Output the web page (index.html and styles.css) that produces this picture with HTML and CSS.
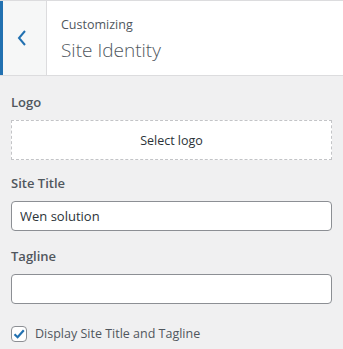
FILE: index.html
```html
<!DOCTYPE html>
<html lang="en">
<head>
    <meta charset="UTF-8">
    <meta name="viewport" content="width=device-width, initial-scale=1.0">
    <title>Customizing - Site Identity</title>
    <link rel="stylesheet" href="styles.css">
</head>
<body>
    <div class="panel-header">
        <button class="back-button" aria-label="Back">
            <svg width="10" height="16" viewBox="0 0 10 16">
                <path d="M8 1 L2 8 L8 15" fill="none" stroke="#2271b1" stroke-width="2"/>
            </svg>
        </button>
        <div class="panel-title">
            <span class="action">Customizing</span>
            <h3>Site Identity</h3>
        </div>
    </div>

    <div class="controls">
        <div class="control logo-control">
            <span class="control-label">Logo</span>
            <button class="upload-button">Select logo</button>
        </div>
        <div class="control">
            <label class="control-label" for="blogname">Site Title</label>
            <input type="text" id="blogname" class="text-input" value="Wen solution">
        </div>
        <div class="control">
            <label class="control-label" for="blogdescription">Tagline</label>
            <input type="text" id="blogdescription" class="text-input" value="">
        </div>
        <div class="control checkbox-control">
            <label class="checkbox-label">
                <span class="checkbox">
                    <svg width="14" height="14" viewBox="0 0 14 14">
                        <path d="M2.5 7.2 L5.6 10.2 L11.8 3.2" fill="none" stroke="#2271b1" stroke-width="2.2"/>
                    </svg>
                </span>
                Display Site Title and Tagline
            </label>
        </div>
    </div>
</body>
</html>
```

FILE: styles.css
```css
body {
    font-family: "Open Sans", "Noto Sans", sans-serif;
    margin: 0;
    background-color: #f0f0f1;
    color: #50575e;
}
.panel-header {
    display: flex;
    height: 74px;
    background-color: white;
    border-top: 1px solid #dcdcde;
    border-bottom: 1px solid #dcdcde;
}
.back-button {
    width: 47px;
    padding: 0 5px 0 0;
    background-color: #f6f7f7;
    border: none;
    border-left: 3px solid #2271b1;
    border-right: 1px solid #dcdcde;
    display: flex;
    align-items: center;
    justify-content: center;
    cursor: pointer;
}
.panel-title {
    padding: 16px 0 0 14px;
}
.action {
    display: block;
    font-size: 12.5px;
    line-height: 16px;
    color: #50575e;
}
.panel-title h3 {
    margin: 5px 0 0 0;
    font-size: 19px;
    font-weight: 300;
    line-height: 24px;
    color: #50575e;
}
.controls {
    padding: 17px 11px 0 11px;
}
.control {
    margin-bottom: 16px;
}
.logo-control {
    margin-bottom: 14px;
}
.control-label {
    display: block;
    font-size: 13px;
    font-weight: 600;
    line-height: 18px;
    margin-bottom: 9px;
}
.upload-button {
    display: block;
    width: 100%;
    height: 40px;
    background-color: white;
    border: 1px dashed #c3c4c7;
    font-family: inherit;
    font-size: 12.5px;
    color: #2c3338;
}
.text-input {
    display: block;
    box-sizing: border-box;
    width: 100%;
    height: 30px;
    padding: 0 8px;
    border: 1px solid #8c8f94;
    border-radius: 4px;
    font-family: inherit;
    font-size: 13px;
    color: #2c3338;
}
.checkbox-control {
    margin-top: 21px;
}
.checkbox-label {
    display: flex;
    align-items: center;
    gap: 8px;
    font-size: 12.5px;
    line-height: 18px;
}
.checkbox {
    display: flex;
    align-items: center;
    justify-content: center;
    box-sizing: border-box;
    width: 16px;
    height: 16px;
    background-color: white;
    border: 1px solid #8c8f94;
    border-radius: 4px;
}
```
